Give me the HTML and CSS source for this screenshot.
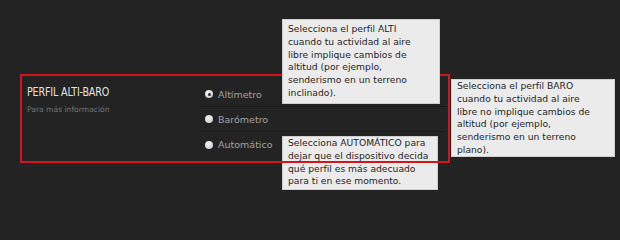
FILE: index.html
```html
<!DOCTYPE html>
<html lang="es">
<head>
<meta charset="utf-8">
<link rel="stylesheet" href="styles.css">
</head>
<body>
<div class="page">
  <section class="panel">
    <div class="info">
      <h2 class="title">PERFIL ALTI-BARO</h2>
      <p class="sub">Para más información</p>
    </div>
    <ul class="options">
      <li class="opt"><span class="radio checked"></span><span class="label">Altímetro</span></li>
      <li class="opt"><span class="radio"></span><span class="label">Barómetro</span></li>
      <li class="opt"><span class="radio"></span><span class="label">Automático</span></li>
    </ul>
  </section>

  <div class="tip tip-auto">Selecciona AUTOMÁTICO para<br>dejar que el dispositivo decida<br>qué perfil es más adecuado<br>para ti en ese momento.</div>
  <div class="highlight"></div>
  <div class="tip tip-alti">Selecciona el perfil ALTI<br>cuando tu actividad al aire<br>libre implique cambios de<br>altitud (por ejemplo,<br>senderismo en un terreno<br>inclinado).</div>
  <div class="tip tip-baro">Selecciona el perfil BARO<br>cuando tu actividad al aire<br>libre no implique cambios de<br>altitud (por ejemplo,<br>senderismo en un terreno<br>plano).</div>
</div>
</body>
</html>
```

FILE: styles.css
```css
* { box-sizing: border-box; }
html, body { margin: 0; padding: 0; }
body {
  background: #232323;
  width: 620px;
  height: 214px;
  overflow: hidden;
  font-family: "DejaVu Sans", "Liberation Sans", sans-serif;
}
.page {
  position: relative;
  width: 620px;
  height: 214px;
  padding-top: 82px;
}
.panel {
  display: flex;
  padding-left: 27px;
}
.info {
  width: 173px;
}
.title {
  margin: 2px 0 0 0;
  font-family: "DejaVu Sans Condensed", "Liberation Sans Narrow", sans-serif;
  font-stretch: condensed;
  font-weight: normal;
  font-size: 13px;
  line-height: 15px;
  letter-spacing: -0.2px;
  color: #e2e2e2;
  white-space: nowrap;
  transform: scaleX(0.82);
  transform-origin: left center;
}
.sub {
  margin: 6px 0 0 0;
  font-size: 7.6px;
  line-height: 10px;
  color: #767676;
}
.options {
  list-style: none;
  margin: 0;
  padding: 0;
  width: 245px;
}
.opt {
  display: flex;
  align-items: center;
  height: 25px;
  border-bottom: 1px solid #1a1a1a;
  padding-left: 5px;
}
.opt:last-child { border-bottom: none; }
.radio {
  width: 8px;
  height: 8px;
  border-radius: 50%;
  background: radial-gradient(circle at 40% 35%, #f4f4f4 0%, #d8d8d8 60%, #b8b8b8 100%);
  display: flex;
  align-items: center;
  justify-content: center;
  flex: none;
}
.radio.checked::after {
  content: "";
  width: 3px;
  height: 3px;
  border-radius: 50%;
  background: #2e2e2e;
}
.label {
  margin-left: 5px;
  font-size: 9.5px;
  color: #a2a2a2;
}
.highlight {
  position: absolute;
  left: 20px;
  top: 74px;
  width: 430px;
  height: 89px;
  border: 2px solid #d4141e;
}
.tip {
  position: absolute;
  background: #ebebeb;
  border: 1px solid #cfcfcf;
  color: #1f1f1f;
  font-size: 9.2px;
  line-height: 12.8px;
  padding: 3px 5px;
  white-space: nowrap;
}
.tip-alti {
  left: 282px;
  top: 19px;
  width: 158px;
  height: 85px;
  padding-top: 3px;
}
.tip-baro {
  left: 451px;
  top: 79px;
  width: 164px;
  height: 78px;
  padding-top: 0;
}
.tip-auto {
  left: 282px;
  top: 136px;
  width: 156px;
  height: 54px;
  padding-top: 0;
}
```
